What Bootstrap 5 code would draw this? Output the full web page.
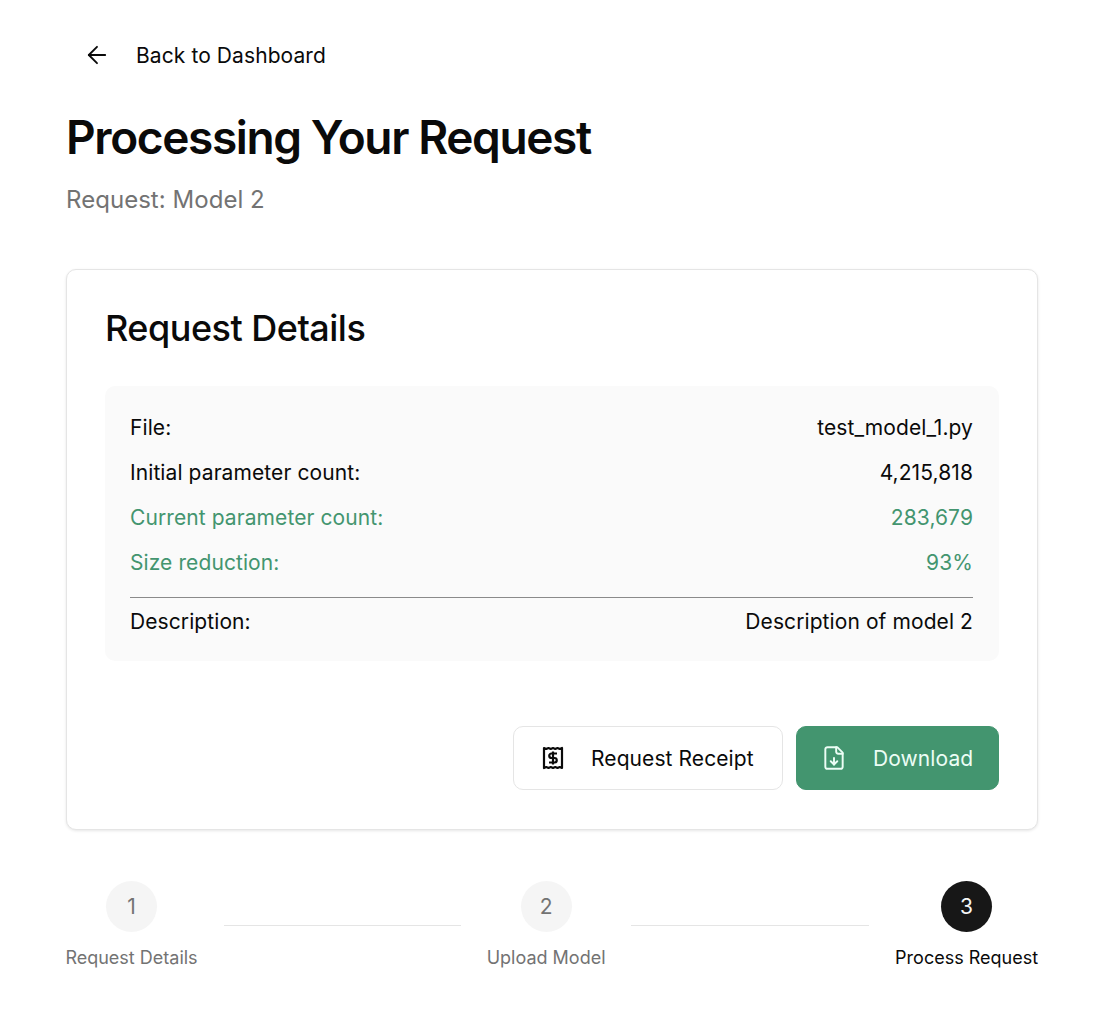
<!DOCTYPE html>
<html lang="en">
<head>
  <meta charset="UTF-8" />
  <meta name="viewport" content="width=device-width, initial-scale=1.0"/>
  <title>Processing Your Request</title>
  <link href="https://cdn.jsdelivr.net/npm/bootstrap@5.3.0/dist/css/bootstrap.min.css" rel="stylesheet"/>
  <style>
    body {
      background: #fff;
      color: #0a0a0a;
      font-family: 'Inter', 'Open Sans', sans-serif;
      font-size: 21px;
      letter-spacing: 0.09px;
    }
    .page-wrap {
      padding: 31px 72px 0 66px;
    }
    .back-link {
      height: 48px;
      padding-left: 17px;
      gap: 25px;
      color: #0a0a0a;
      text-decoration: none;
    }
    .back-link span { padding-top: 2px; }
    .page-title {
      font-size: 46px;
      font-weight: 600;
      line-height: 56px;
      letter-spacing: -1.38px;
      margin: 30px 0 0;
    }
    .page-sub {
      font-size: 24px;
      line-height: 32px;
      color: #737373;
      letter-spacing: 0.04px;
      margin: 19px 0 0;
    }
    .details-card {
      margin-top: 53px;
      height: 561px;
      padding: 38px;
      border: 1px solid #e5e5e5;
      border-radius: 10px;
      box-shadow: 0 1px 3px rgba(0,0,0,0.1);
    }
    .details-title {
      font-size: 36px;
      font-weight: 500;
      line-height: 40px;
      letter-spacing: -0.5px;
      margin: 0 0 38px;
    }
    .details-panel {
      background: #fafafa;
      border-radius: 10px;
      padding: 26px 26px 0 25px;
      height: 275px;
    }
    .detail-row {
      line-height: 32px;
      margin-bottom: 13px;
    }
    .detail-row.is-green {
      color: #43956f;
    }
    .detail-rule {
      margin: 18px 0 8px;
      border: 0;
      border-top: 1px solid #8a8a8a;
      opacity: 1;
    }
    .action-row {
      margin-top: 65px;
      gap: 13px;
    }
    .action-btn {
      height: 64px;
      border-radius: 10px;
      font-size: 21px;
      letter-spacing: 0.09px;
      display: flex;
      align-items: center;
    }
    .action-btn span { padding-top: 2px; }
    .btn-receipt {
      width: 270px;
      padding: 0 0 0 27px;
      gap: 26px;
      background: #fff;
      border: 1px solid #e5e5e5;
      color: #0a0a0a;
    }
    .btn-download {
      width: 203px;
      padding: 0 0 0 24px;
      gap: 26px;
      background: #43956f;
      border: 1px solid #43956f;
      color: #ecfdf5;
    }
    .stepper {
      margin-top: 51px;
      width: 973px;
    }
    .step-item {
      width: 131px;
      font-size: 18px;
      color: #737373;
      letter-spacing: 0;
      white-space: nowrap;
    }
    .step-dot {
      width: 51px;
      height: 51px;
      border-radius: 50%;
      background: #f5f5f5;
      font-size: 21px;
      margin-bottom: 12px;
    }
    .step-item.is-active { color: #0a0a0a; }
    .step-item.is-active .step-dot { background: #171717; color: #f5f5f5; }
    .step-line {
      height: 1px;
      background: #e5e5e5;
      margin-top: 44px;
    }
    .step-line.first { width: 237px; margin-left: 27px; }
    .step-line.second { width: 239px; margin-left: 24px; margin-right: 25px; }
    .step-item.middle { margin-left: 25px; width: 121px; }
    .step-item.last { width: 145px; }
  </style>
</head>
<body>

<div class="page-wrap">
  <a href="#" class="back-link d-flex align-items-center">
    <svg width="28" height="28" viewBox="0 0 24 24" fill="none" stroke="#0a0a0a" stroke-width="1.6" stroke-linecap="round" stroke-linejoin="round"><path d="M19 12H5"/><path d="m12 19-7-7 7-7"/></svg>
    <span>Back to Dashboard</span>
  </a>
  <h1 class="page-title">Processing Your Request</h1>
  <p class="page-sub">Request: Model 2</p>

  <div class="details-card bg-white">
    <h2 class="details-title">Request Details</h2>
    <div class="details-panel">
      <div class="detail-row d-flex justify-content-between"><span>File:</span><span>test_model_1.py</span></div>
      <div class="detail-row d-flex justify-content-between"><span>Initial parameter count:</span><span>4,215,818</span></div>
      <div class="detail-row is-green d-flex justify-content-between"><span>Current parameter count:</span><span>283,679</span></div>
      <div class="detail-row is-green d-flex justify-content-between"><span>Size reduction:</span><span>93%</span></div>
      <hr class="detail-rule">
      <div class="detail-row d-flex justify-content-between"><span>Description:</span><span>Description of model 2</span></div>
    </div>
    <div class="action-row d-flex justify-content-end">
      <button type="button" class="btn action-btn btn-receipt">
        <svg width="24" height="24" viewBox="0 0 24 24" fill="none" stroke="#0a0a0a" stroke-width="2.2" stroke-linejoin="round"><path d="M3 2l2.25 1 2.25-1 2.25 1 2.25-1 2.25 1 2.25-1 2.25 1 2.25-1v20l-2.25-1-2.25 1-2.25-1-2.25 1-2.25-1-2.25 1-2.25-1-2.25 1z"/><path d="M16 7.5h-5.5a2.2 2.2 0 0 0 0 4.5h3a2.2 2.2 0 0 1 0 4.5H8"/><path d="M12 5.5v13"/></svg>
        <span>Request Receipt</span>
      </button>
      <button type="button" class="btn action-btn btn-download">
        <svg width="26" height="26" viewBox="0 0 24 24" fill="none" stroke="#ecfdf5" stroke-width="1.8" stroke-linecap="round" stroke-linejoin="round"><path d="M15 2H6a2 2 0 0 0-2 2v16a2 2 0 0 0 2 2h12a2 2 0 0 0 2-2V7z"/><path d="M14 2v4a2 2 0 0 0 2 2h4"/><path d="M12 18v-6"/><path d="m9 15 3 3 3-3"/></svg>
        <span>Download</span>
      </button>
    </div>
  </div>

  <div class="stepper d-flex">
    <div class="step-item d-flex flex-column align-items-center">
      <div class="step-dot d-flex align-items-center justify-content-center">1</div>
      <span>Request Details</span>
    </div>
    <div class="step-line first"></div>
    <div class="step-item middle d-flex flex-column align-items-center">
      <div class="step-dot d-flex align-items-center justify-content-center">2</div>
      <span>Upload Model</span>
    </div>
    <div class="step-line second"></div>
    <div class="step-item last is-active d-flex flex-column align-items-center">
      <div class="step-dot d-flex align-items-center justify-content-center">3</div>
      <span>Process Request</span>
    </div>
  </div>
</div>

<script src="https://cdn.jsdelivr.net/npm/bootstrap@5.3.0/dist/js/bootstrap.bundle.min.js"></script>
</body>
</html>
